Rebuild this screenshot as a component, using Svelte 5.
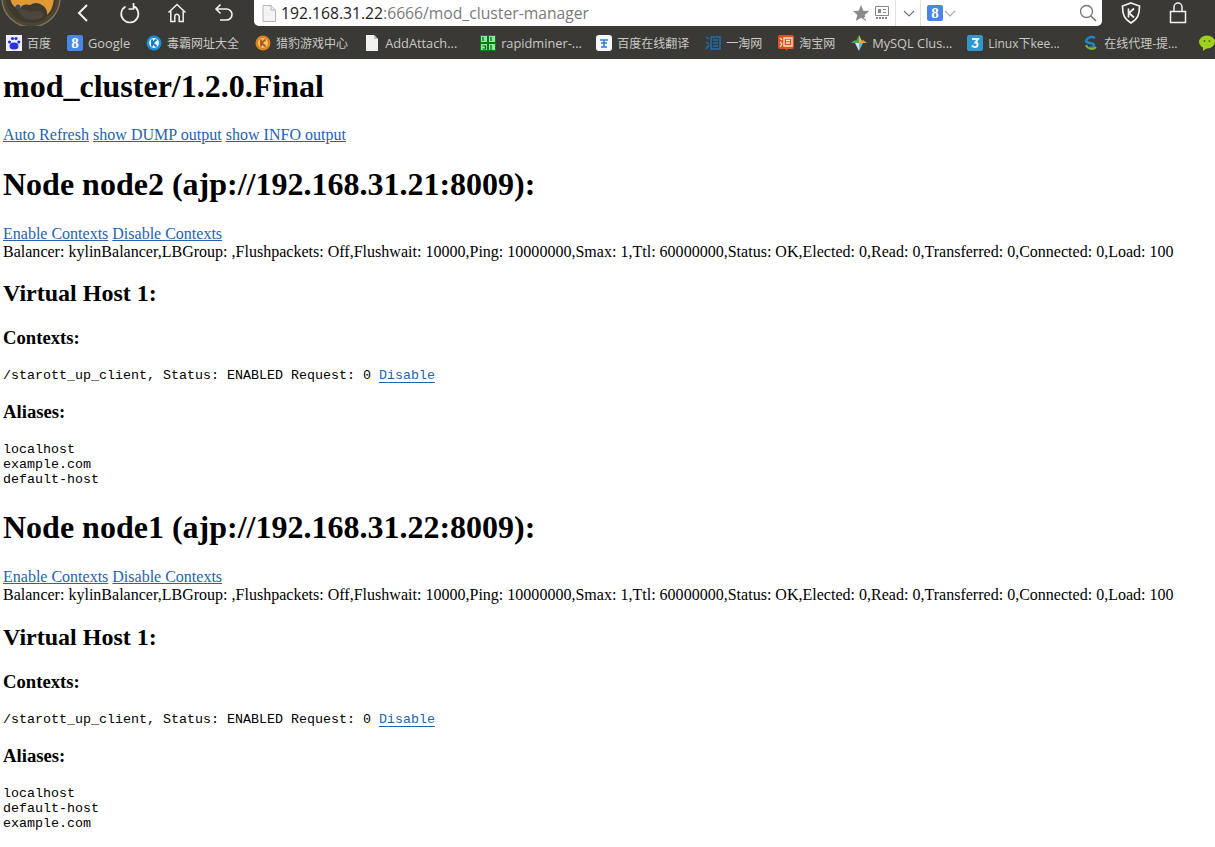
<script>
  const bookmarks = [
    { id: "baidu", label: "百度" },
    { id: "google", label: "Google", latin: true },
    { id: "duba", label: "毒霸网址大全" },
    { id: "liebao", label: "猎豹游戏中心" },
    { id: "doc", label: "AddAttach...", latin: true, cut: true },
    { id: "fresh", label: "rapidminer-...", latin: true, cut: true },
    { id: "fanyi", label: "百度在线翻译" },
    { id: "yitao", label: "一淘网" },
    { id: "taobao", label: "淘宝网" },
    { id: "mysql", label: "MySQL Clus...", latin: true, cut: true },
    { id: "linux", label: "Linux下kee...", cut: true },
    { id: "proxy", label: "在线代理-提...", cut: true },
    { id: "wechat", label: "" },
  ];

  const nodes = [
    { name: "node2", url: "ajp://192.168.31.21:8009", aliases: ["localhost", "example.com", "default-host"] },
    { name: "node1", url: "ajp://192.168.31.22:8009", aliases: ["localhost", "default-host", "example.com"] },
  ];

  const stats =
    "Balancer: kylinBalancer,LBGroup: ,Flushpackets: Off,Flushwait: 10000,Ping: 10000000,Smax: 1,Ttl: 60000000,Status: OK,Elected: 0,Read: 0,Transferred: 0,Connected: 0,Load: 100";
</script>

<header class="chrome">
  <div class="toolbar">
    <div class="logo">
      <svg width="62" height="26" viewBox="0 0 62 26">
        <circle cx="31" cy="-2" r="29" fill="#4d4434" stroke="#7d7558" stroke-width="1.500" />
        <circle cx="31" cy="-2" r="25" fill="#3f3a30" />
        <path d="M10 -2 Q12 8 20 9 Q22 3 30 5 Q36 1 42 5 Q48 9 47 15 Q53 10 54 -2Z" fill="#e09a35" />
        <path d="M18 10 Q24 8 30 12 Q40 8 44 14 Q42 20 32 20 Q22 20 18 10Z" fill="#4c463c" />
        <circle cx="18" cy="7" r="2.500" fill="#3d4a55" />
      </svg>
    </div>
    <button class="tool back" aria-label="Back">
      <svg width="14" height="20" viewBox="0 0 14 20"><path d="M11 2 3 10l8 8" fill="none" stroke="#f2f2f2" stroke-width="2" /></svg>
    </button>
    <button class="tool reload" aria-label="Reload">
      <svg width="22" height="22" viewBox="0 0 22 22"><path d="M6.600 4.400a8.600 8.600 0 1 0 7.400-.500M14.500 1v6h-5" fill="none" stroke="#f2f2f2" stroke-width="1.700" /></svg>
    </button>
    <button class="tool home" aria-label="Home">
      <svg width="20" height="20" viewBox="0 0 20 20"><path d="M1.500 9.500 10 1.500l8.500 8M3.800 8v10.500h4v-5a2.200 2.200 0 0 1 4.400 0v5h4V8" fill="none" stroke="#f2f2f2" stroke-width="1.500" /></svg>
    </button>
    <button class="tool undo" aria-label="Undo">
      <svg width="20" height="20" viewBox="0 0 20 20"><path d="M6.500 1.500 2 6l4.500 4.500M2 6h10.500a5.500 5.500 0 0 1 0 11H6" fill="none" stroke="#f2f2f2" stroke-width="1.600" /></svg>
    </button>
    <div class="urlbar">
      <svg class="page-icon" width="14" height="17" viewBox="0 0 14 17"><path d="M1 .5h8l4.500 4.500v11.500H1z" fill="#f4f4f4" stroke="#b5b5b5" /><path d="M9 .5V5h4.500" fill="none" stroke="#b5b5b5" /></svg>
      <span class="url"><span class="host">192.168.31.22</span>:6666/mod_cluster-manager</span>
      <span class="url-tools">
        <svg width="18" height="17" viewBox="0 0 18 17"><path d="M8 0l2.300 5.700 6 .4-4.600 3.900 1.500 6L8 12.800 2.800 16l1.500-6L0 6.100l5.700-.4z" fill="#8a8a8a" /><path d="M11 13h6M14 10v6" stroke="#fff" stroke-width="1.500" /></svg>
        <svg class="qr" width="14" height="14" viewBox="0 0 14 14"><path d="M.5.5h13v9H.500z" fill="none" stroke="#888" /><path d="M3 3h3v4H3zM8 3h3v1H8zM8 6h3v1H8z" fill="#888" /><path d="M1 12h12" stroke="#888" stroke-width="2" stroke-dasharray="2 1" /></svg>
        <span class="sep first"></span>
        <svg class="chev" width="12" height="7" viewBox="0 0 12 7"><path d="M1 1l5 5 5-5" fill="none" stroke="#777" stroke-width="1.200" /></svg>
        <span class="sep"></span>
        <span class="gbadge">8</span>
        <svg class="chev small" width="12" height="7" viewBox="0 0 12 7"><path d="M1 1l5 5 5-5" fill="none" stroke="#aaa" stroke-width="1.200" /></svg>
      </span>
      <svg class="search" width="18" height="18" viewBox="0 0 18 18"><circle cx="7.500" cy="7.500" r="6" fill="none" stroke="#777" stroke-width="1.300" /><path d="M12 12l5 5" stroke="#777" stroke-width="1.500" /></svg>
    </div>
    <svg class="shield" width="20" height="22" viewBox="0 0 20 22"><path d="M10 1l8.500 3c0 8-1.500 13-8.500 17C3 17 1.500 12 1.500 4z" fill="none" stroke="#f2f2f2" stroke-width="1.700" /><path d="M7.500 6.500v9M13 6.500 8 11l5 4.500" fill="none" stroke="#f2f2f2" stroke-width="1.700" /></svg>
    <svg class="lock" width="18" height="22" viewBox="0 0 18 22"><path d="M1.500 9.500h15v11h-15zM5 9.500V5a4 4 0 0 1 8 0v4.500" fill="none" stroke="#f2f2f2" stroke-width="1.500" /></svg>
  </div>

  <nav class="bookmarks">
    {#each bookmarks as b}
      <span class="bookmark" class:cut={b.cut}>
        <span class="favicon">
          {#if b.id === "baidu"}
            <svg viewBox="0 0 16 16"><rect width="16" height="16" fill="#eef" /><ellipse cx="8" cy="11" rx="4.500" ry="3.500" fill="#2932e1" /><circle cx="3.500" cy="7" r="1.600" fill="#2932e1" /><circle cx="6.500" cy="3.500" r="1.600" fill="#2932e1" /><circle cx="10" cy="3.500" r="1.600" fill="#2932e1" /><circle cx="12.800" cy="7" r="1.600" fill="#2932e1" /></svg>
          {:else if b.id === "google"}
            <span class="gicon">8</span>
          {:else if b.id === "duba"}
            <svg viewBox="0 0 16 16"><circle cx="8" cy="8" r="7.500" fill="#1b8fd6" /><circle cx="8" cy="8" r="5" fill="#e8f6ff" /><path d="M6 4.500v7M10.500 4.500 6.500 8l4 3.500" fill="none" stroke="#1273b5" stroke-width="1.800" /></svg>
          {:else if b.id === "liebao"}
            <svg viewBox="0 0 16 16"><circle cx="8" cy="8" r="7.500" fill="#d9851f" /><circle cx="8" cy="8" r="5" fill="#f3c26a" /><path d="M6 4.500v7M10.500 4.500 6.500 8l4 3.500" fill="none" stroke="#b5521a" stroke-width="1.800" /></svg>
          {:else if b.id === "doc"}
            <svg viewBox="0 0 16 16"><path d="M2 0h8l4 4v12H2z" fill="#f1f1f1" /><path d="M10 0v4h4" fill="#bbb" /></svg>
          {:else if b.id === "fresh"}
            <svg viewBox="0 0 16 16"><rect width="16" height="16" fill="#0a7d12" /><path d="M1 1h6v6H1zM9 1h6v6H9zM1 9h6v6H1zM9 9h6v6H9z" fill="#8fe89a" /><path d="M3 2v4M11 2v4M2.500 11h3v3h-3M11 10v5" stroke="#0a5d10" stroke-width="1.200" fill="none" /></svg>
          {:else if b.id === "fanyi"}
            <svg viewBox="0 0 16 16"><rect width="16" height="16" rx="3" fill="#f4f8fc" /><path d="M4 5h8M8 5v7M5 8h6M5 12h6" stroke="#2a7fc6" stroke-width="1.500" /></svg>
          {:else if b.id === "yitao"}
            <svg viewBox="0 0 16 16"><path d="M1 2l3 2M1 7l3 2M1 14l3-4" stroke="#1d6fb0" stroke-width="1.500" /><path d="M6 2h9v12H6zM8 5h5M8 8h5M8 11h5" fill="none" stroke="#1d6fb0" stroke-width="1.500" /></svg>
          {:else if b.id === "taobao"}
            <svg viewBox="0 0 16 16"><rect width="16" height="14" rx="2" fill="#e0521d" /><path d="M8 14v2l2-2z" fill="#e0521d" /><path d="M2 3l2 2M2 7l2 2M2 12l2-3M6 3h8v8H6zM8 5.500h4M8 8h4" fill="none" stroke="#fbe3d2" stroke-width="1.300" /></svg>
          {:else if b.id === "mysql"}
            <svg viewBox="0 0 16 16"><path d="M8 0l4 8H8z" fill="#e8b93c" /><path d="M8 0 4 8h4z" fill="#3aa655" /><path d="M0 8l4-3 4 3z" fill="#4caf50" /><path d="M16 8l-4-3-4 3z" fill="#f0a030" /><path d="M8 16 4 8h4z" fill="#cfe5f5" /><path d="M8 16l4-8H8z" fill="#6fb3e0" /></svg>
          {:else if b.id === "linux"}
            <svg viewBox="0 0 16 16"><rect width="16" height="16" rx="2" fill="#2f97c9" /><path d="M5 4h6l-2.500 3.500c2.500 0 3 4.500-.5 4.500-1.500 0-2.500-.7-3-1.500" fill="none" stroke="#e8f6ff" stroke-width="2" /></svg>
          {:else if b.id === "proxy"}
            <svg viewBox="0 0 16 16"><path d="M12 3A6 6 0 0 0 3 6c1 3 7 1 8 4a3 3 0 0 1-5 2" fill="none" stroke="#1f86c6" stroke-width="2.500" /><path d="M3 10a6 6 0 0 0 10 2" fill="none" stroke="#7fb02e" stroke-width="2" /></svg>
          {:else if b.id === "wechat"}
            <svg viewBox="0 0 16 16"><ellipse cx="8" cy="7" rx="8" ry="6.500" fill="#9ed21a" /><path d="M4 12v4l4-3z" fill="#9ed21a" /><circle cx="5.500" cy="6" r="1" fill="#4a6a08" /><circle cx="10.500" cy="6" r="1" fill="#4a6a08" /></svg>
          {/if}
        </span>
        {#if b.label}<span class="label" class:latin={b.latin}>{b.label}</span>{/if}
      </span>
    {/each}
  </nav>
</header>

<main class="page">
  <h1 class="title">mod_cluster/1.2.0.Final</h1>
  <div class="links">
    <a href="#r">Auto Refresh</a>
    <a href="#d">show DUMP output</a>
    <a href="#i">show INFO output</a>
  </div>

  {#each nodes as node}
    <h1>Node {node.name} ({node.url}):</h1>
    <div>
      <a href="#e">Enable Contexts</a>
      <a href="#x">Disable Contexts</a>
    </div>
    <div class="stats">{stats}</div>
    <h2>Virtual Host 1:</h2>
    <h3>Contexts:</h3>
    <pre>/starott_up_client, Status: ENABLED Request: 0 <a href="#n">Disable</a></pre>
    <h3>Aliases:</h3>
    <pre class="aliases">{node.aliases.join("\n")}</pre>
  {/each}
</main>

<style>
  :global(body) {
    margin: 0;
    background: #fff;
  }

  .chrome {
    font-family: "Open Sans", "Noto Sans CJK SC", sans-serif;
    background: #3a3935;
  }

  .toolbar {
    height: 26px;
    display: flex;
    align-items: center;
    overflow: hidden;
  }

  .logo {
    width: 62px;
    height: 26px;
    flex: none;
  }

  .tool {
    all: unset;
    display: flex;
    align-items: center;
    justify-content: center;
    flex: none;
  }

  .back {
    width: 14px;
    margin-left: 14px;
  }
  .reload {
    width: 22px;
    margin-left: 29px;
  }
  .home {
    width: 20px;
    margin-left: 26px;
  }
  .undo {
    width: 20px;
    margin-left: 27px;
  }

  .urlbar {
    flex: none;
    width: 848px;
    height: 26px;
    margin-left: 20px;
    background: #fff;
    border-radius: 0 0 5px 5px;
    display: flex;
    align-items: center;
    box-sizing: border-box;
    padding: 0 5px 0 8px;
  }

  .page-icon {
    flex: none;
  }

  .url {
    margin-left: 5px;
    font-size: 15.700px;
    color: #7a7a7a;
    white-space: nowrap;
  }

  .host {
    color: #222;
  }

  .url-tools {
    margin-left: auto;
    display: flex;
    align-items: center;
    height: 26px;
  }

  .qr {
    margin-left: 4px;
  }

  .sep {
    width: 1px;
    height: 26px;
    background: #e2e2e2;
    margin-left: 5px;
  }
  .sep.first {
    margin-left: 6px;
  }

  .chev {
    margin-left: 7px;
  }
  .chev.small {
    margin-left: 1px;
  }

  .gbadge {
    margin-left: 6px;
    width: 16px;
    height: 16px;
    border-radius: 2px;
    background: #4a86e8;
    color: #fff;
    font: bold 15px/16px "Liberation Serif", serif;
    text-align: center;
  }

  .search {
    margin-left: 123px;
    flex: none;
  }

  .shield {
    flex: none;
    margin-left: 19px;
  }
  .lock {
    flex: none;
    margin-left: 28px;
  }

  .bookmarks {
    height: 33px;
    display: flex;
    align-items: center;
    padding-left: 6px;
    gap: 16px;
    overflow: hidden;
    white-space: nowrap;
  }

  .bookmark {
    display: flex;
    align-items: center;
    gap: 5px;
    flex: none;
    font-size: 12px;
    color: #c9c9c6;
  }

  .bookmark.cut {
    width: 100px;
  }

  .label.latin {
    font-size: 12.800px;
  }

  .favicon {
    width: 16px;
    height: 16px;
    display: block;
    flex: none;
  }

  .favicon svg {
    display: block;
    width: 16px;
    height: 16px;
  }

  .gicon {
    display: block;
    width: 16px;
    height: 16px;
    border-radius: 2px;
    background: #4a86e8;
    color: #fff;
    font: bold 15px/16px "Liberation Serif", serif;
    text-align: center;
  }

  .page {
    padding: 0 3px;
    font-family: "Liberation Serif", serif;
    font-size: 16px;
    color: #000;
    line-height: 18px;
  }

  a {
    color: #2463b0;
  }

  h1 {
    font-size: 32px;
    line-height: 37px;
    margin: 21px 0 22px;
  }

  .title {
    margin: 9px 0 21px;
  }

  .links {
    margin-bottom: 21.750px;
    letter-spacing: 0.02px;
  }

  .stats {
    letter-spacing: 0.012px;
  }

  h2 {
    font-size: 24px;
    line-height: 27px;
    margin: 19.250px 0 20px;
  }

  h3 {
    font-size: 18.700px;
    line-height: 21px;
    margin: 18px 0 20px;
  }

  pre {
    font-family: "Liberation Mono", monospace;
    font-size: 13.333px;
    line-height: 15px;
    margin: 13px 0;
  }

  pre a {
    text-underline-offset: 3px;
  }

  .aliases {
    margin-bottom: 22.250px;
  }
</style>
